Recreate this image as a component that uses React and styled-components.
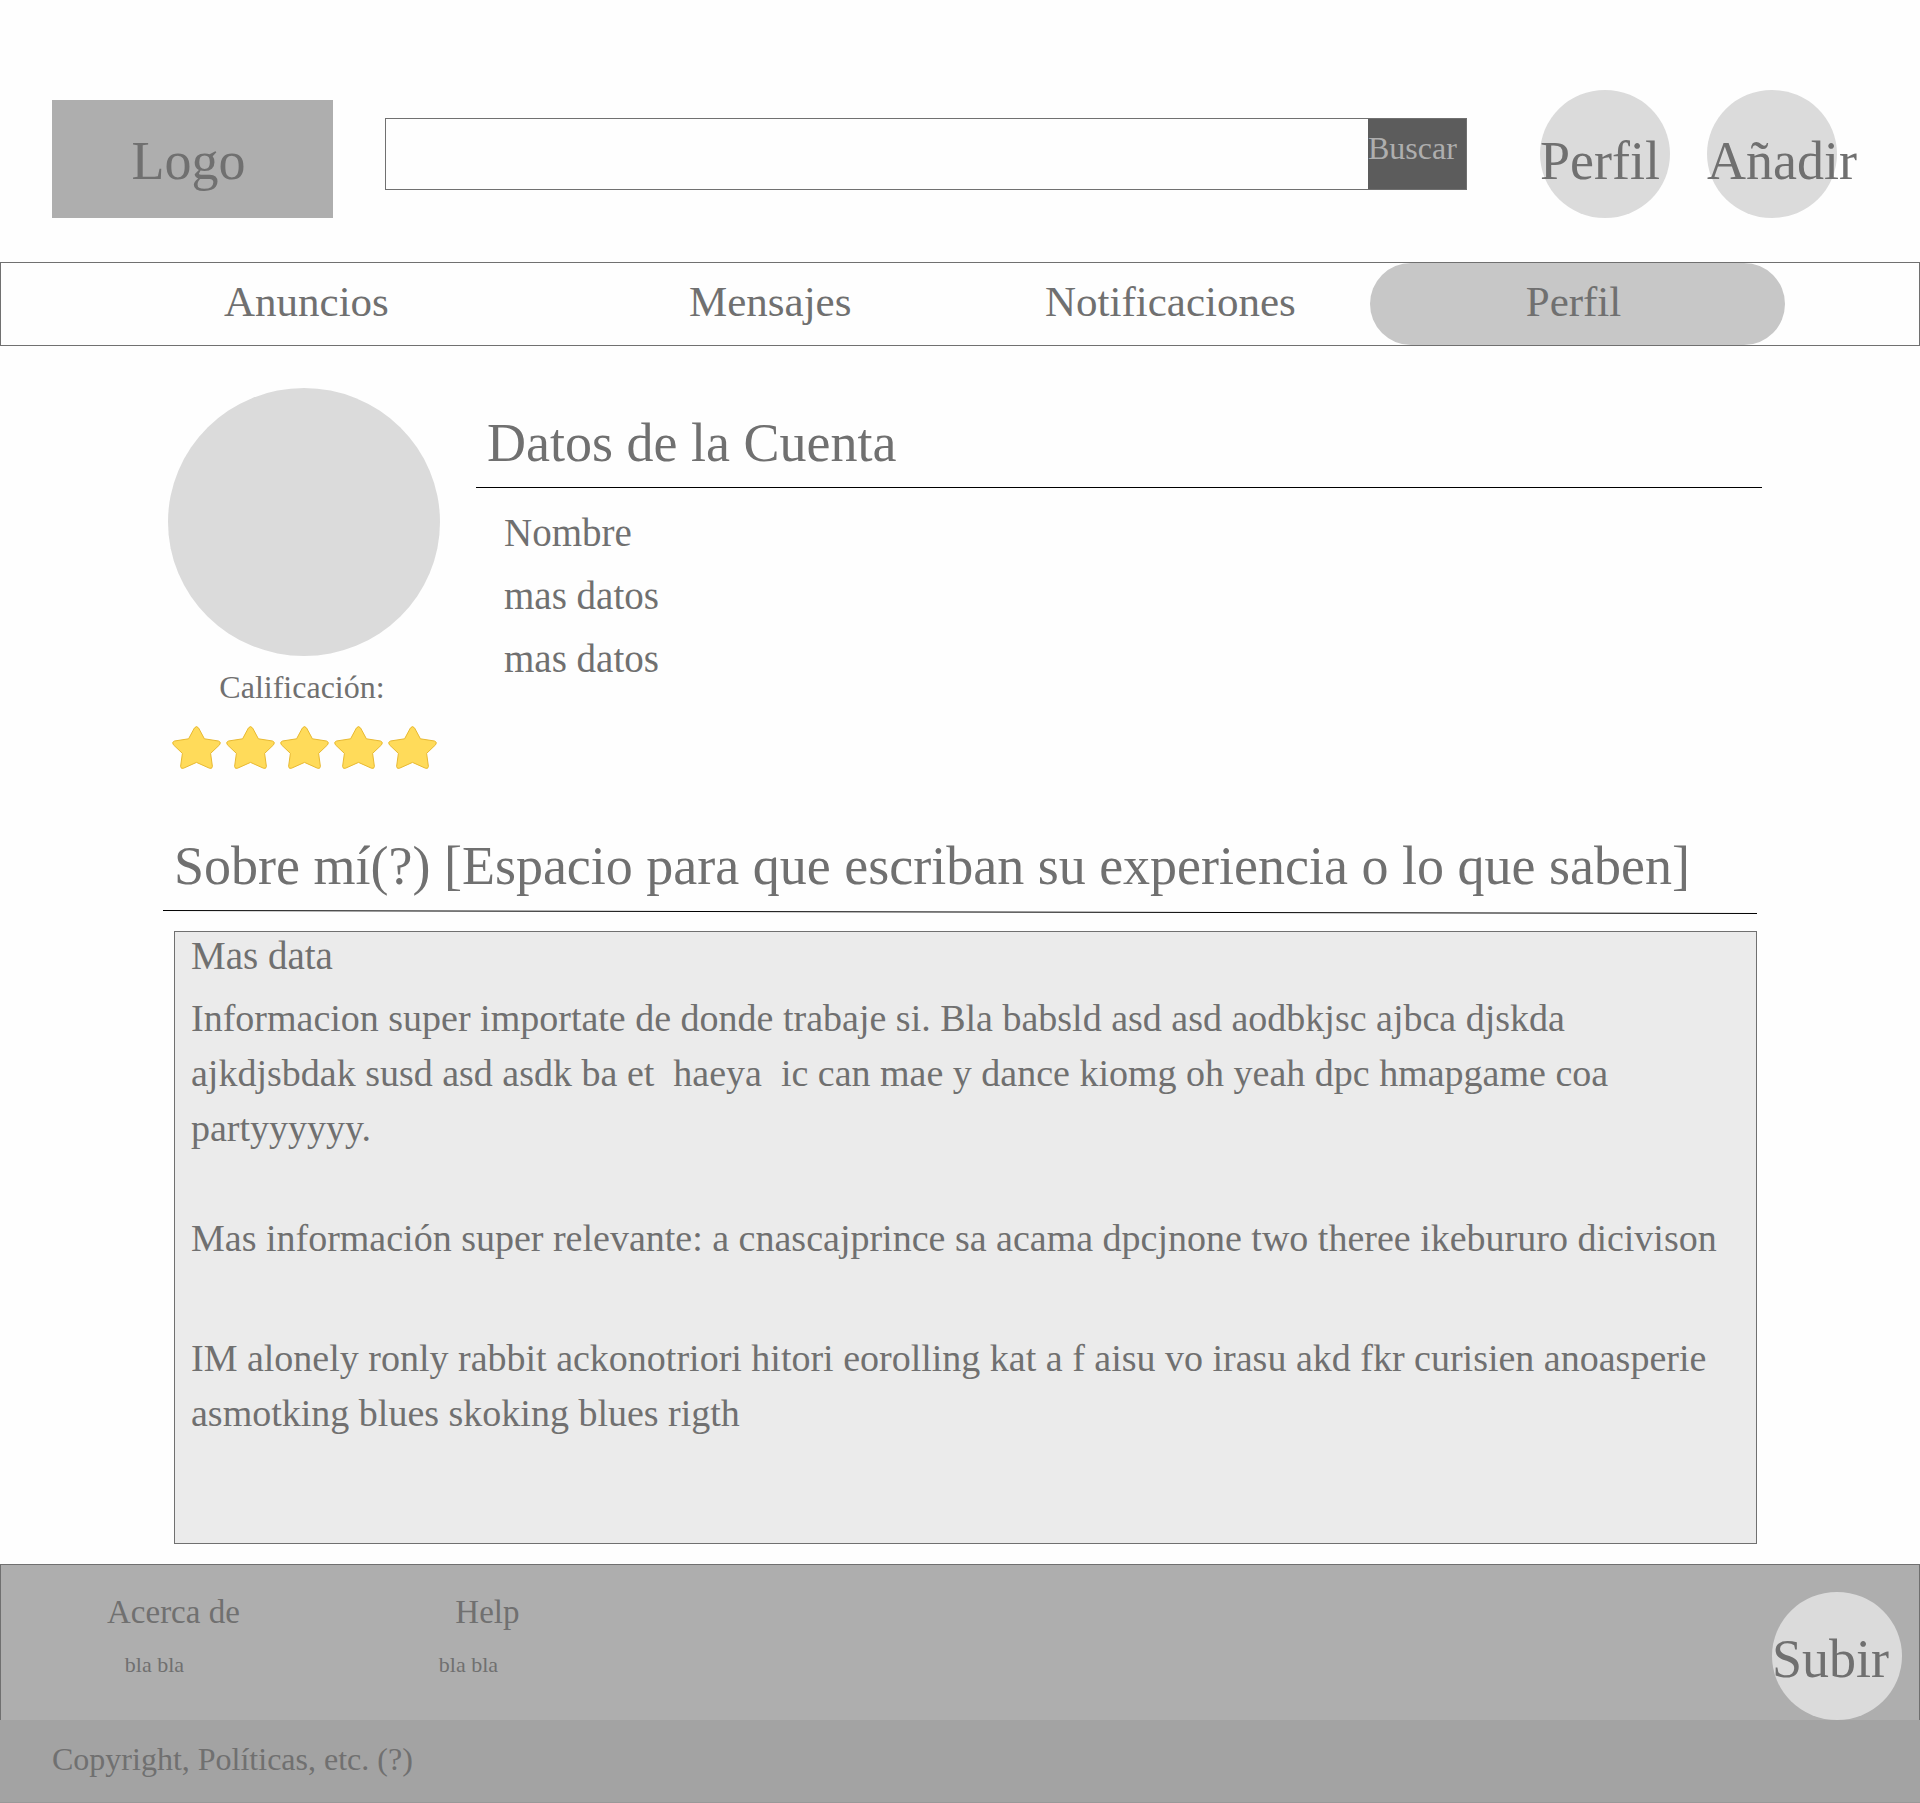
import React from "react";
import styled, { createGlobalStyle } from "styled-components";

const ink = "#707070";
const disc = "#dbdbdb";
const panel = "#aeaeae";

const GlobalStyle = createGlobalStyle`
  *, *::before, *::after { box-sizing: border-box; }
  body {
    margin: 0;
    background: #fefefe;
    color: ${ink};
    font-family: "Liberation Serif", serif;
  }
  h2, h3, p, ul { margin: 0; padding: 0; font-weight: 400; }
  a { color: inherit; text-decoration: none; }
  button, input { font-family: inherit; color: inherit; border-radius: 0; }
`;

const Header = styled.header`
  display: flex;
  align-items: center;
  padding: 90px 83px 44px 52px;
`;

const Logo = styled.a`
  display: flex;
  align-items: center;
  justify-content: center;
  align-self: flex-end;
  flex: none;
  width: 281px;
  height: 118px;
  padding: 4px 8px 0 0;
  background: ${panel};
  font-size: 54px;
`;

const Search = styled.form`
  display: flex;
  flex: 1;
  min-width: 0;
  height: 72px;
  margin: 0 73px 0 52px;
  border: 1px solid ${ink};
`;

const SearchInput = styled.input`
  flex: 1;
  min-width: 0;
  border: 0;
  padding: 0 16px;
  background: transparent;
  font-size: 32px;
  outline: none;
`;

const SearchButton = styled.button`
  width: 98px;
  border: 0;
  padding: 0 0 12px;
  background: #5c5c5c;
  color: ${panel};
  font-size: 32px;
  text-align: left;
`;

const Actions = styled.div`
  display: flex;
  flex: none;
  gap: 37px;
`;

const RoundButton = styled.button`
  display: flex;
  align-items: center;
  width: 130px;
  height: 128px;
  border: 0;
  border-radius: 50%;
  padding: ${(p) => (p.$low ? "14px" : "6px")} 0 0;
  background: ${disc};
  font-size: 54px;
  white-space: nowrap;
`;

const Nav = styled.nav`
  display: grid;
  grid-template-columns: 465fr 356fr 325fr 415fr;
  height: 84px;
  padding: 0 134px 0 223px;
  border: 1px solid ${ink};
`;

const NavLink = styled.a`
  display: flex;
  align-items: center;
  justify-content: ${(p) => (p.$active ? "center" : "flex-start")};
  padding: ${(p) => (p.$active ? "0 8px 6px 0" : "0 0 6px")};
  border-radius: 42px;
  background: ${(p) => (p.$active ? "#c7c7c7" : "transparent")};
  font-size: 43px;
`;

const Profile = styled.section`
  display: flex;
  gap: 36px;
  padding: 42px 158px 66px 168px;
`;

const Identity = styled.div`
  display: flex;
  flex: none;
  flex-direction: column;
  align-items: center;
  width: 272px;
`;

const Avatar = styled.div`
  width: 100%;
  height: 268px;
  border-radius: 50%;
  background: ${disc};
`;

const RatingLabel = styled.p`
  margin: 11px 0 19px;
  padding-right: 4px;
  font-size: 32px;
  line-height: 40px;
`;

const Stars = styled.div`
  display: flex;
  gap: 5px;

  svg { display: block; }
`;

const Account = styled.div`
  flex: 1;
  padding-top: 24px;
`;

const Title = styled.h2`
  padding: 1px 11px 14px;
  font-size: 54px;
  line-height: 60px;
  white-space: nowrap;
`;

const AccountTitle = styled(Title)`
  border-bottom: 1px solid #000;
`;

const DataList = styled.ul`
  padding: 13px 28px 0;
  list-style: none;
  font-size: 39px;
  line-height: 63px;
`;

const About = styled.section`
  padding: 0 163px 20px;
`;

const Rule = styled.svg`
  display: block;
  width: 100%;
  height: 4px;
`;

const AboutBox = styled.div`
  margin: 17px 0 0 11px;
  padding: 1px 16px 102px;
  border: 1px solid ${ink};
  background: #ebebeb;
`;

const Lead = styled.h3`
  margin-bottom: 12px;
  font-size: 39px;
  line-height: 46px;
`;

const Text = styled.p`
  font-size: 38px;
  line-height: 55px;
  white-space: pre-wrap;

  & + & { margin-top: 55px; }
  & + & + & { margin-top: 65px; }
`;

const FooterMain = styled.div`
  display: flex;
  align-items: flex-start;
  padding: 27px 17px 0 106px;
  border: 1px solid ${ink};
  border-bottom: 0;
  background: ${panel};
`;

const FooterLinks = styled.div`
  display: flex;
  flex: 1;
  gap: 199px;
`;

const FooterColumn = styled.div`
  display: flex;
  flex-direction: column;
  align-items: center;
  gap: 18px;
`;

const FooterHeading = styled.h3`
  font-size: 33px;
  line-height: 40px;
`;

const FooterLink = styled.a`
  padding-right: 38px;
  font-size: 22px;
  line-height: 30px;
`;

const Legal = styled.p`
  padding: 19px 52px 23px;
  border-bottom: 1px solid #999;
  background: #a3a3a3;
  font-size: 32px;
  line-height: 40px;
`;

const Star = () => (
  <svg width="49" height="43" viewBox="0 0 49 43" aria-hidden="true">
    <path
      d="M22.4 2Q24.5-.8 26.6 2L32.4 12.8L46.5 15Q49.6 16 47.6 18.8L38.6 27.4L40.4 40.4Q40.2 43.2 37.4 42.2L24.5 36.4L11.6 42.2Q8.8 43.2 8.6 40.4L10.4 27.4L1.4 18.8Q-.6 16 2.5 15L16.6 12.8Z"
      fill="#ffdb5a"
      stroke="#e8b931"
      strokeWidth="1"
      strokeLinejoin="round"
    />
  </svg>
);

const sections = ["Anuncios", "Mensajes", "Notificaciones", "Perfil"];
const accountData = ["Nombre", "mas datos", "mas datos"];
const footerColumns = ["Acerca de", "Help"];
const paragraphs = [
  "Informacion super importate de donde trabaje si. Bla babsld asd asd aodbkjsc ajbca djskda\najkdjsbdak susd asd asdk ba et  haeya  ic can mae y dance kiomg oh yeah dpc hmapgame coa\npartyyyyyy.",
  "Mas información super relevante: a cnascajprince sa acama dpcjnone two theree ikebururo dicivison",
  "IM alonely ronly rabbit ackonotriori hitori eorolling kat a f aisu vo irasu akd fkr curisien anoasperie\nasmotking blues skoking blues rigth",
];

export default function App() {
  return (
    <>
      <GlobalStyle />
      <Header>
        <Logo href="#">Logo</Logo>
        <Search role="search" onSubmit={(e) => e.preventDefault()}>
          <SearchInput type="search" aria-label="Buscar" />
          <SearchButton type="submit">Buscar</SearchButton>
        </Search>
        <Actions>
          <RoundButton type="button" $low>Perfil</RoundButton>
          <RoundButton type="button" $low>Añadir</RoundButton>
        </Actions>
      </Header>
      <Nav>
        {sections.map((name) => (
          <NavLink key={name} href="#" $active={name === "Perfil"}>
            {name}
          </NavLink>
        ))}
      </Nav>
      <main>
        <Profile>
          <Identity>
            <Avatar />
            <RatingLabel>Calificación:</RatingLabel>
            <Stars role="img" aria-label="5">
              {[1, 2, 3, 4, 5].map((n) => (
                <Star key={n} />
              ))}
            </Stars>
          </Identity>
          <Account>
            <AccountTitle>Datos de la Cuenta</AccountTitle>
            <DataList>
              {accountData.map((item, i) => (
                <li key={i}>{item}</li>
              ))}
            </DataList>
          </Account>
        </Profile>
        <About>
          <Title>Sobre mí(?) [Espacio para que escriban su experiencia o lo que saben]</Title>
          <Rule viewBox="0 0 1594 4" preserveAspectRatio="none" aria-hidden="true">
            <line x1="0" y1="0.5" x2="1594" y2="3.5" stroke="#000" />
          </Rule>
          <AboutBox>
            <Lead>Mas data</Lead>
            {paragraphs.map((text) => (
              <Text key={text}>{text}</Text>
            ))}
          </AboutBox>
        </About>
      </main>
      <footer>
        <FooterMain>
          <FooterLinks>
            {footerColumns.map((name) => (
              <FooterColumn key={name}>
                <FooterHeading>{name}</FooterHeading>
                <FooterLink href="#">bla bla</FooterLink>
              </FooterColumn>
            ))}
          </FooterLinks>
          <RoundButton type="button">Subir</RoundButton>
        </FooterMain>
        <Legal>Copyright, Políticas, etc. (?)</Legal>
      </footer>
    </>
  );
}
